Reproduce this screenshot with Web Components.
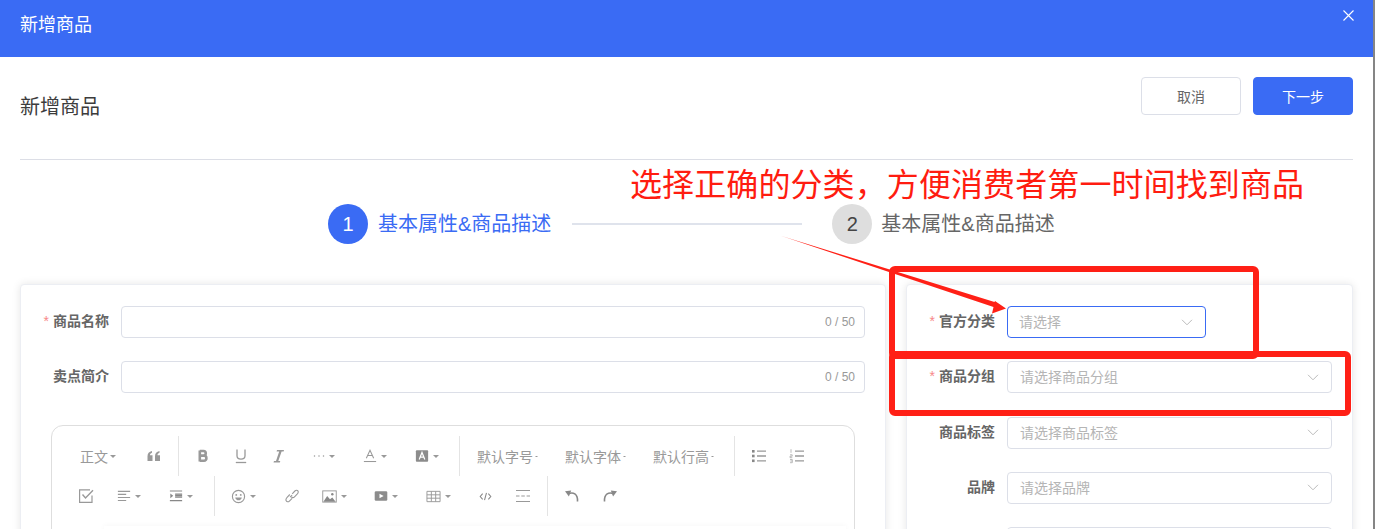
<!DOCTYPE html>
<html lang="zh">
<head>
<meta charset="utf-8">
<title>新增商品</title>
<style>
    html, body {
        margin: 0;
        height: 529px;
        overflow: hidden;
        background: #858585;
    }
    body {
        font-family: "Liberation Sans", "Noto Sans CJK SC", sans-serif;
    }
</style>
</head>
<body>
<add-goods-page>
    <modal-header slot="header">新增商品</modal-header>
    <page-head slot="head" heading="新增商品">
        <plain-button>取消</plain-button>
        <plain-button primary>下一步</plain-button>
    </page-head>
    <step-bar slot="steps"></step-bar>
    <form-card slot="left" style="width: 866px">
        <form-field label="商品名称" required><text-input max="50"></text-input></form-field>
        <form-field label="卖点简介"><text-input max="50"></text-input></form-field>
        <editor-box></editor-box>
    </form-card>
    <form-card slot="right" style="width: 447px">
        <form-field label="官方分类" required><select-box placeholder="请选择" focused style="width: 199px"></select-box></form-field>
        <form-field label="商品分组" required><select-box placeholder="请选择商品分组"></select-box></form-field>
        <form-field label="商品标签"><select-box placeholder="请选择商品标签"></select-box></form-field>
        <form-field label="品牌"><select-box placeholder="请选择品牌"></select-box></form-field>
        <form-field label=""><select-box placeholder=""></select-box></form-field>
    </form-card>
</add-goods-page>
<mark-up-layer></mark-up-layer>

<script>
const CJK = `"Liberation Sans", "Noto Sans CJK SC", sans-serif`;
const BLUE = "#3a6bf4";

class AddGoodsPage extends HTMLElement
{
    constructor()
    {
        super();
        const Shadow = this.attachShadow({mode: "open"});
        Shadow.innerHTML = `
        <style>
            :host {
                display: block;
                width: 1373px;
                height: 529px;
                overflow: hidden;
                background: white;
            }
            .cards {
                display: flex;
                gap: 20px;
                padding: 0 0 0 20px;
                margin-top: 40px;
            }
        </style>
        <slot name="header"></slot>
        <slot name="head"></slot>
        <slot name="steps"></slot>
        <div class="cards">
            <slot name="left"></slot>
            <slot name="right"></slot>
        </div>
        `;
    }
}

class ModalHeader extends HTMLElement
{
    constructor()
    {
        super();
        const Shadow = this.attachShadow({mode: "open"});
        Shadow.innerHTML = `
        <style>
            :host {
                display: flex;
                justify-content: space-between;
                height: 57px;
                box-sizing: border-box;
                padding: 13px 19px 0 20px;
                background: ${BLUE};
                color: white;
                font: 18px/24px ${CJK};
            }
            svg {
                margin-top: -3px;
                width: 11px;
                height: 11px;
            }
        </style>
        <span><slot></slot></span>
        <svg viewBox="0 0 11 11" fill="none" stroke="white" stroke-width="1.1"><path d="M.5.5l10 10M10.5.5l-10 10"/></svg>
        `;
    }
}

class PageHead extends HTMLElement
{
    constructor()
    {
        super();
        const Shadow = this.attachShadow({mode: "open"});
        Shadow.innerHTML = `
        <style>
            :host {
                display: flex;
                justify-content: space-between;
                margin: 0 20px;
                padding: 20px 0 44px;
                border-bottom: 1px solid #dcdee6;
            }
            h1 {
                margin: 0;
                font: 400 20px/60px ${CJK};
                height: 38px;
                line-height: 60px;
                color: #3c3c3c;
            }
            .actions {
                display: flex;
                gap: 12px;
            }
        </style>
        <h1></h1>
        <div class="actions"><slot></slot></div>
        `;
        Shadow.querySelector("h1").textContent = this.getAttribute("heading");
    }
}

class PlainButton extends HTMLElement
{
    constructor()
    {
        super();
        const Shadow = this.attachShadow({mode: "open"});
        Shadow.innerHTML = `
        <style>
            :host {
                display: flex;
                align-items: center;
                justify-content: center;
                box-sizing: border-box;
                width: 100px;
                height: 38px;
                border: 1px solid #dcdfe8;
                border-radius: 4px;
                background: white;
                color: #666;
                font: 14px ${CJK};
            }
            :host([primary]) {
                border-color: ${BLUE};
                background: ${BLUE};
                color: white;
            }
        </style>
        <slot></slot>
        `;
    }
}

class StepBar extends HTMLElement
{
    constructor()
    {
        super();
        const Shadow = this.attachShadow({mode: "open"});
        Shadow.innerHTML = `
        <style>
            :host {
                display: flex;
                align-items: center;
                padding-left: 328px;
                margin-top: 44px;
                font: 20px/40px ${CJK};
                color: #666;
            }
            .num {
                width: 40px;
                height: 40px;
                border-radius: 50%;
                background: #dedede;
                color: #444;
                text-align: center;
                font-size: 20px;
            }
            .active .num {
                background: ${BLUE};
                color: white;
            }
            .step {
                display: flex;
                gap: 10px;
                white-space: nowrap;
            }
            .active {
                color: ${BLUE};
            }
            .line {
                width: 230px;
                height: 2px;
                margin: 0 30px 0 21px;
                background: #dfe3ec;
            }
            .step.two {
                gap: 9px;
            }
        </style>
        <div class="step active"><span class="num">1</span><span>基本属性&amp;商品描述</span></div>
        <div class="line"></div>
        <div class="step two"><span class="num">2</span><span>基本属性&amp;商品描述</span></div>
        `;
    }
}

class FormCard extends HTMLElement
{
    constructor()
    {
        super();
        const Shadow = this.attachShadow({mode: "open"});
        Shadow.innerHTML = `
        <style>
            :host {
                display: block;
                box-sizing: border-box;
                height: 400px;
                padding: 21px 20px 0 0;
                border: 1px solid #eceef3;
                border-radius: 4px;
                background: white;
                box-shadow: 0 0 8px rgba(0, 0, 0, .1);
            }
        </style>
        <slot></slot>
        `;
    }
}

class FormField extends HTMLElement
{
    constructor()
    {
        super();
        const Shadow = this.attachShadow({mode: "open"});
        Shadow.innerHTML = `
        <style>
            :host {
                display: flex;
                align-items: center;
                gap: 12px;
                margin-bottom: 23.3px;
            }
            .label {
                flex: none;
                width: 88px;
                padding-bottom: 2px;
                text-align: right;
                font: 700 14px/30px ${CJK};
                color: #666;
            }
            .star {
                margin-right: 4px;
                font-weight: 400;
                color: #f78989;
            }
            .control {
                flex: 1;
            }
        </style>
        <div class="label"></div>
        <div class="control"><slot></slot></div>
        `;
        const Label = Shadow.querySelector(".label");
        if (this.hasAttribute("required")) {
            Label.innerHTML = `<span class="star">*</span>`;
        }
        Label.append(this.getAttribute("label"));
    }
}

class TextInput extends HTMLElement
{
    constructor()
    {
        super();
        const Shadow = this.attachShadow({mode: "open"});
        Shadow.innerHTML = `
        <style>
            :host {
                display: flex;
                align-items: center;
                justify-content: flex-end;
                box-sizing: border-box;
                height: 32px;
                padding-right: 9px;
                border: 1px solid #dcdfe8;
                border-radius: 4px;
                font: 12px ${CJK};
                color: #999;
            }
        </style>
        <span id="Count"></span>
        `;
        Shadow.querySelector("#Count").textContent = "0 / " + this.getAttribute("max");
    }
}

class SelectBox extends HTMLElement
{
    constructor()
    {
        super();
        const Shadow = this.attachShadow({mode: "open"});
        Shadow.innerHTML = `
        <style>
            :host {
                display: flex;
                align-items: center;
                justify-content: space-between;
                box-sizing: border-box;
                height: 32px;
                padding: 0 12px;
                border: 1px solid #dcdfe8;
                border-radius: 4px;
                font: 14px ${CJK};
                color: #b5b5b5;
            }
            :host([focused]) {
                border-color: ${BLUE};
                padding-left: 11px;
            }
            #Text {
                padding-bottom: 2px;
            }
            svg {
                width: 12px;
                height: 7px;
            }
        </style>
        <span id="Text"></span>
        <svg viewBox="0 0 12 7" fill="none" stroke="#bbb" stroke-width="1"><path d="M1 .8l5 5 5-5"/></svg>
        `;
        Shadow.querySelector("#Text").textContent = this.getAttribute("placeholder");
    }
}

// 工具栏图标
const Icons = {
    quote: `<path fill="#999" d="M1.500 13V8.200C1.500 5.400 3 3.600 6 3v1.800C4.600 5.200 4 6 4 7.200h2.500V13zM9 13V8.200C9 5.400 10.500 3.600 13.500 3v1.800C12.100 5.200 11.500 6 11.500 7.200H14V13z"/>`,
    bold: `<path fill="none" stroke="#999" stroke-width="2.600" d="M4.800 2.500v11M4.800 3h3.700c3 0 3 4.600 0 4.600H4.800M4.800 7.600h4.200c3.200 0 3.200 5.200 0 5.200H4.800"/>`,
    underline: `<path fill="none" stroke="#999" stroke-width="1.300" d="M4 1.500v6.300c0 4.300 8 4.300 8 0V1.500"/><path stroke="#999" stroke-width="1.300" d="M2.800 14.500h10.400"/>`,
    italic: `<path fill="#999" d="M6 2h7l-.4 1.500h-2L7.300 13h2L8.800 14.500H2.500L3 13h2L8.200 3.500h-2.600z"/>`,
    more: `<circle cx="2" cy="8" r="1" fill="#999"/><circle cx="8" cy="8" r="1" fill="#999"/><circle cx="14" cy="8" r="1" fill="#999"/>`,
    color: `<path fill="none" stroke="#999" stroke-width="1.200" d="M3.800 10.500L8 1.500l4.200 9M5.200 7.500h5.600"/><path stroke="#999" stroke-width="1.200" d="M1 14.300h14"/>`,
    bg: `<rect x="1" y="1.500" width="14" height="13" rx="1" fill="#8c8c8c"/><path fill="none" stroke="#fff" stroke-width="1.400" d="M4.800 12L8 4l3.200 8M6 9.300h4"/>`,
    ul: `<path stroke="#999" stroke-width="1.300" d="M6 3.200h9M6 8h9M6 12.800h9"/><rect x="1" y="2" width="2.600" height="2.600" fill="#888"/><rect x="1" y="6.700" width="2.600" height="2.600" fill="#888"/><rect x="1" y="11.500" width="2.600" height="2.600" fill="#888"/>`,
    ol: `<path stroke="#999" stroke-width="1.300" d="M6 3.200h9M6 8h9M6 12.800h9"/><path fill="none" stroke="#aaa" stroke-width=".8" d="M2 1.200v3.600M1 6.800h2.200v1.400H1v1.500h2.300M1 11.500h2.300v3.200H1M1.300 13h2"/>`,
    check: `<path fill="none" stroke="#999" stroke-width="1.200" d="M14 7.500V14.400H1.600V1.800H12"/><path fill="none" stroke="#999" stroke-width="1.400" d="M4.500 6.500l3 3.400L15 2.200"/>`,
    align: `<path stroke="#999" stroke-width="1.300" d="M1 2.700h14M1 6.200h9.500M1 9.700h14M1 13.200h9.500"/>`,
    indent: `<path stroke="#888" stroke-width="1.300" d="M1 2.300h14M7 5.800h8M7 9.300h8M1 13.300h14"/><path stroke="#888" stroke-width="2" d="M7 7.500h8"/><path fill="#888" d="M1.500 5l3.300 2.800-3.300 2.800z"/>`,
    emoji: `<circle cx="8" cy="8" r="6.500" fill="none" stroke="#999" stroke-width="1.200"/><circle cx="5.600" cy="6.300" r="1" fill="#999"/><circle cx="10.400" cy="6.300" r="1" fill="#999"/><path fill="#999" d="M4.500 9h7c-.4 2-1.700 3-3.500 3s-3.100-1-3.500-3z"/>`,
    link: `<path fill="none" stroke="#999" stroke-width="1.100" d="M6.800 6.500L4.100 9.300C3 10.500 2.500 11.500 3.200 12.800s2.200 1.300 3.200.3l2.700-2.800M7 9.200l2.100-2.100M9.200 5.800l2.700-2.800c1-1 2.300-1.100 3-.1s.2 2.200-.8 3.300l-2.600 2.600c-1 1-2.300 1.100-3.100.1"/>`,
    image: `<rect x=".8" y="2" width="14.400" height="12" fill="none" stroke="#999"/><path fill="#888" d="M1.500 13.500l4-6 3 3.500 2.500-2 3.500 4.500z"/><circle cx="11" cy="5.500" r="1.300" fill="#888"/>`,
    video: `<rect x=".8" y="2.500" width="14.400" height="11" rx="1.500" fill="#8c8c8c"/><path fill="#fff" d="M6.300 5.300L11 8l-4.700 2.700z"/>`,
    table: `<path fill="none" stroke="#999" d="M1 2.500h14v11H1zM1 6.200h14M1 9.800h14M5.700 2.500v11M10.300 2.500v11"/>`,
    code: `<path fill="none" stroke="#888" stroke-width="1.300" d="M4.500 4.500L1.500 8l3 3.500M11.500 4.500l3 3.500-3 3.500M9.200 3.500L6.800 12.500"/>`,
    split: `<path stroke="#999" stroke-width="1.200" d="M1 2.500h14M1 13.500h14"/><path stroke="#999" stroke-width="1.200" stroke-dasharray="3.500 1.800" d="M1 8h14"/>`,
    undo: `<path fill="none" stroke="#888" stroke-width="1.600" d="M4.300 5.800C9 3.600 14 5.800 13.500 13.500"/><path fill="#888" d="M1 3.200l6.200-.7-2.300 6.100z"/>`,
    redo: `<path fill="none" stroke="#888" stroke-width="1.600" d="M11.700 5.800C7 3.600 2 5.800 2.500 13.500"/><path fill="#888" d="M15 3.200l-6.200-.7 2.300 6.100z"/>`
};

class ToolItem extends HTMLElement
{
    constructor()
    {
        super();
        const Shadow = this.attachShadow({mode: "open"});
        const Name = this.getAttribute("icon");
        const Text = this.getAttribute("text");
        const Size = this.getAttribute("size") || 16;
        const Caret = this.hasAttribute("caret");
        // 默认字号这类文字下拉的小三角更小
        const CaretW = this.hasAttribute("tiny") ? 3 : 6;
        Shadow.innerHTML = `
        <style>
            :host {
                display: flex;
                align-items: center;
                justify-content: center;
                gap: ${Text ? 2 : 4}px;
                flex: none;
                height: 40px;
                font: 14px ${CJK};
                color: #999;
                white-space: nowrap;
            }
            svg.icon {
                width: ${Size}px;
                height: ${Size}px;
            }
            svg.caret {
                width: ${CaretW}px;
                height: ${CaretW / 2}px;
            }
        </style>
        ${Name ? `<svg class="icon" viewBox="0 0 16 16">${Icons[Name]}</svg>` : ""}
        ${Text ? `<span>${Text}</span>` : ""}
        ${Caret ? `<svg class="caret" viewBox="0 0 8 4"><path fill="#999" d="M0 0h8L4 4z"/></svg>` : ""}
        `;
        this.style.width = this.getAttribute("w") + "px";
    }
}

class ToolGroup extends HTMLElement
{
    constructor()
    {
        super();
        const Shadow = this.attachShadow({mode: "open"});
        Shadow.innerHTML = `
        <style>
            :host {
                display: flex;
                box-sizing: border-box;
                height: 40px;
                flex: none;
            }
            :host([line]) {
                border-right: 1px solid #e4e4e4;
            }
        </style>
        <slot></slot>
        `;
    }
}

class EditorBox extends HTMLElement
{
    constructor()
    {
        super();
        const Shadow = this.attachShadow({mode: "open"});
        Shadow.innerHTML = `
        <style>
            :host {
                display: block;
                box-sizing: border-box;
                width: 804px;
                height: 300px;
                margin: 32px 0 0 30px;
                padding: 10px 8px 0;
                border: 1px solid #dedede;
                border-radius: 12px;
            }
            .row {
                display: flex;
            }
            .body {
                height: 40px;
                margin: 10px 0 0 44px;
                box-shadow: 0 -1px 5px rgba(0, 0, 0, .03);
            }
        </style>
        <div class="row">
            <tool-group line style="width:119px">
                <tool-item text="正文" caret w="76"></tool-item>
                <tool-item icon="quote" w="36"></tool-item>
            </tool-group>
            <tool-group line style="width:281px;padding-left:5px">
                <tool-item icon="bold" w="38"></tool-item>
                <tool-item icon="underline" w="38"></tool-item>
                <tool-item icon="italic" w="38"></tool-item>
                <tool-item icon="more" size="12" w="51" caret></tool-item>
                <tool-item icon="color" size="14" w="52" caret></tool-item>
                <tool-item icon="bg" size="14" w="52" caret></tool-item>
            </tool-group>
            <tool-group line style="width:275px;padding-left:17px">
                <tool-item text="默认字号" caret tiny w="88" style="justify-content:flex-start"></tool-item>
                <tool-item text="默认字体" caret tiny w="88" style="justify-content:flex-start"></tool-item>
                <tool-item text="默认行高" caret tiny w="80" style="justify-content:flex-start"></tool-item>
            </tool-group>
            <tool-group style="padding-left:5px">
                <tool-item icon="ul" w="38"></tool-item>
                <tool-item icon="ol" w="38"></tool-item>
            </tool-group>
        </div>
        <div class="row">
            <tool-group line style="width:155px;padding-left:6px">
                <tool-item icon="check" w="40"></tool-item>
                <tool-item icon="align" size="14" w="46" caret></tool-item>
                <tool-item icon="indent" size="14" w="58" caret></tool-item>
            </tool-group>
            <tool-group line style="width:333px">
                <tool-item icon="emoji" size="15" w="57" caret></tool-item>
                <tool-item icon="link" w="38"></tool-item>
                <tool-item icon="image" size="15" w="48" caret></tool-item>
                <tool-item icon="video" size="14" w="56" caret></tool-item>
                <tool-item icon="table" size="15" w="48" caret></tool-item>
                <tool-item icon="code" size="13" w="46"></tool-item>
                <tool-item icon="split" w="30"></tool-item>
            </tool-group>
            <tool-group style="padding-left:5px">
                <tool-item icon="undo" w="38"></tool-item>
                <tool-item icon="redo" w="38"></tool-item>
            </tool-group>
        </div>
        <div class="body"></div>
        `;
    }
}

// 截图上的红色标注
class MarkUpLayer extends HTMLElement
{
    constructor()
    {
        super();
        const Shadow = this.attachShadow({mode: "open"});
        Shadow.innerHTML = `
        <style>
            :host {
                position: absolute;
                left: 0;
                top: 0;
                width: 1375px;
                height: 529px;
                pointer-events: none;
            }
            svg {
                position: absolute;
                left: 0;
                top: 0;
            }
            .note {
                position: absolute;
                left: 630px;
                top: 159px;
                font: 32px/46px "Noto Sans CJK SC", sans-serif;
                letter-spacing: .1px;
                color: #ff1c10;
                white-space: nowrap;
            }
        </style>
        <svg width="1375" height="529" viewBox="0 0 1375 529">
            <rect x="892" y="269" width="364" height="87" rx="3" fill="none" stroke="#ff2016" stroke-width="6"/>
            <rect x="892" y="354" width="456" height="59" rx="3" fill="none" stroke="#ff2016" stroke-width="6"/>
            <defs>
                <linearGradient id="Fade" gradientUnits="userSpaceOnUse" x1="780" y1="236" x2="805" y2="244">
                    <stop offset="0" stop-color="#ff2016" stop-opacity=".5"/>
                    <stop offset="1" stop-color="#ff2016"/>
                </linearGradient>
            </defs>
            <path fill="url(#Fade)" d="M780 235.500L994.500 302 995 301 1006 308.500 992 313.500 993.500 307z"/>
        </svg>
        <span class="note">选择正确的分类，方便消费者第一时间找到商品</span>
        `;
    }
}

customElements.define("add-goods-page", AddGoodsPage);
customElements.define("modal-header", ModalHeader);
customElements.define("page-head", PageHead);
customElements.define("plain-button", PlainButton);
customElements.define("step-bar", StepBar);
customElements.define("form-card", FormCard);
customElements.define("form-field", FormField);
customElements.define("text-input", TextInput);
customElements.define("select-box", SelectBox);
customElements.define("tool-item", ToolItem);
customElements.define("tool-group", ToolGroup);
customElements.define("editor-box", EditorBox);
customElements.define("mark-up-layer", MarkUpLayer);
</script>
</body>
</html>
